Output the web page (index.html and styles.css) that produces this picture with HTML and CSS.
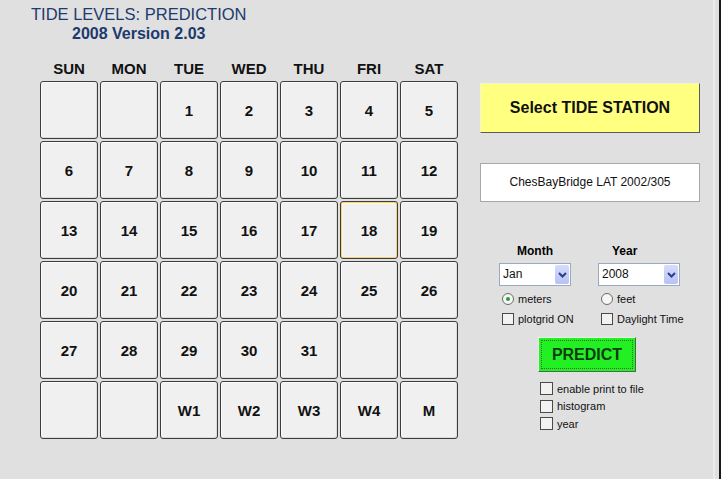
FILE: index.html
```html
<!DOCTYPE html>
<html lang="en">
<head>
    <meta charset="UTF-8">
    <title>Tide Levels: Prediction</title>
    <link rel="stylesheet" href="styles.css">
</head>
<body>
    <div class="frame">
        <div class="left">
            <div class="title">
                <div>TIDE LEVELS: PREDICTION</div>
                <div>2008 Version 2.03</div>
            </div>
            <div class="days">
                <span>SUN</span><span>MON</span><span>TUE</span><span>WED</span><span>THU</span><span>FRI</span><span>SAT</span>
            </div>
            <div class="calendar">
                <button class="cell"></button>
                <button class="cell"></button>
                <button class="cell">1</button>
                <button class="cell">2</button>
                <button class="cell">3</button>
                <button class="cell">4</button>
                <button class="cell">5</button>
                <button class="cell">6</button>
                <button class="cell">7</button>
                <button class="cell">8</button>
                <button class="cell">9</button>
                <button class="cell">10</button>
                <button class="cell">11</button>
                <button class="cell">12</button>
                <button class="cell">13</button>
                <button class="cell">14</button>
                <button class="cell">15</button>
                <button class="cell">16</button>
                <button class="cell">17</button>
                <button class="cell focus">18</button>
                <button class="cell">19</button>
                <button class="cell">20</button>
                <button class="cell">21</button>
                <button class="cell">22</button>
                <button class="cell">23</button>
                <button class="cell">24</button>
                <button class="cell">25</button>
                <button class="cell">26</button>
                <button class="cell">27</button>
                <button class="cell">28</button>
                <button class="cell">29</button>
                <button class="cell">30</button>
                <button class="cell">31</button>
                <button class="cell"></button>
                <button class="cell"></button>
                <button class="cell"></button>
                <button class="cell"></button>
                <button class="cell">W1</button>
                <button class="cell">W2</button>
                <button class="cell">W3</button>
                <button class="cell">W4</button>
                <button class="cell">M</button>
            </div>
        </div>

        <div class="right">
            <button class="station-btn">Select TIDE STATION</button>
            <div class="station-box">ChesBayBridge LAT 2002/305</div>

            <div class="pickers">
                <div class="col col-month">
                    <div class="label">Month</div>
                    <div class="select month">
                        <span class="value">Jan</span>
                        <span class="arrow"><svg width="9" height="6" viewBox="0 0 9 6"><path d="M1 1 L4.5 4.5 L8 1" fill="none" stroke="#2a3f8a" stroke-width="2"/></svg></span>
                    </div>
                    <div class="opt"><span class="radio on"></span>meters</div>
                    <div class="opt"><span class="check"></span>plotgrid ON</div>
                </div>
                <div class="col col-year">
                    <div class="label">Year</div>
                    <div class="select year">
                        <span class="value">2008</span>
                        <span class="arrow"><svg width="9" height="6" viewBox="0 0 9 6"><path d="M1 1 L4.5 4.5 L8 1" fill="none" stroke="#2a3f8a" stroke-width="2"/></svg></span>
                    </div>
                    <div class="opt"><span class="radio"></span>feet</div>
                    <div class="opt"><span class="check"></span>Daylight Time</div>
                </div>
            </div>

            <button class="predict"><span>PREDICT</span></button>

            <div class="extras">
                <div class="opt small"><span class="check"></span>enable print to file</div>
                <div class="opt small"><span class="check"></span>histogram</div>
                <div class="opt small"><span class="check"></span>year</div>
            </div>
        </div>
    </div>
</body>
</html>
```

FILE: styles.css
```css
body {
    margin: 0;
    background: #e0e0e0;
    font-family: "Liberation Sans", Arial, sans-serif;
}
.frame {
    width: 721px;
    height: 479px;
    display: flex;
    box-sizing: border-box;
    border-right: 2px solid #1a1a1a;
    box-shadow: inset -4px 0 0 #e0e0e0, inset -6px 0 0 #ececec;
    background: #e0e0e0;
}
.left {
    width: 480px;
    padding-left: 31px;
    box-sizing: border-box;
}
.title {
    display: inline-block;
    text-align: center;
    color: #1c3a6e;
    font-size: 16.5px;
    line-height: 19px;
    padding-top: 5px;
}
.title div:last-child {
    font-weight: bold;
    font-size: 16px;
    line-height: 19px;
}
.days {
    display: grid;
    grid-template-columns: repeat(7, 58px);
    column-gap: 2px;
    margin: 16px 0 0 9px;
    font-weight: bold;
    font-size: 15px;
    line-height: 20px;
    height: 22px;
    text-align: center;
    color: #111;
}
.calendar {
    display: grid;
    grid-template-columns: repeat(7, 58px);
    grid-auto-rows: 58px;
    gap: 2px;
    margin-left: 9px;
}
.cell {
    border: 1px solid #3c3c3c;
    border-radius: 3px;
    background: #f0f0f0;
    box-shadow: inset 1px 1px 0 #fafafa, inset -1px -1px 0 #dcdcdc;
    font-family: "Liberation Sans", Arial, sans-serif;
    font-weight: bold;
    font-size: 15px;
    color: #111;
    padding: 0;
}
.cell.focus {
    box-shadow: inset 0 0 0 1px #f3d27a, inset 2px 2px 0 #fff8d8;
}
.right {
    width: 220px;
    padding-top: 83px;
}
.station-btn {
    display: block;
    width: 220px;
    height: 50px;
    background: #ffff80;
    border: 1px solid;
    border-color: #f4f4d0 #5a5a5a #5a5a5a #f4f4d0;
    font-family: "Liberation Sans", Arial, sans-serif;
    font-weight: bold;
    font-size: 16px;
    color: #111;
}
.station-box {
    margin-top: 30px;
    height: 37px;
    background: #fff;
    border: 1px solid #a8a8a8;
    text-align: center;
    font-size: 12px;
    line-height: 37px;
    color: #111;
}
.pickers {
    display: flex;
    margin: 42px 0 0 19px;
}
.col {
    display: flex;
    flex-direction: column;
}
.col-month {
    width: 99px;
}
.label {
    font-weight: bold;
    font-size: 12px;
    line-height: 14px;
    height: 14px;
    margin-bottom: 5px;
}
.col-month .label {
    padding-left: 18px;
}
.col-year .label {
    padding-left: 14px;
}
.select {
    display: flex;
    height: 23px;
    box-sizing: border-box;
    border: 1px solid #9aa8c0;
    background: #fff;
    margin-bottom: 6px;
}
.select.month {
    width: 72px;
}
.select.year {
    width: 82px;
}
.select .value {
    flex: 1;
    font-size: 12px;
    line-height: 21px;
    padding-left: 3px;
    color: #111;
}
.select .arrow {
    width: 14px;
    margin: 1px;
    background: linear-gradient(#d6dcfb, #b7c2f4);
    border-radius: 2px;
    display: flex;
    align-items: center;
    justify-content: center;
}
.opt {
    display: flex;
    align-items: center;
    height: 14px;
    margin-bottom: 6px;
    font-size: 11px;
    color: #111;
    margin-left: 3px;
}
.radio {
    width: 10px;
    height: 10px;
    border: 1px solid #6a6a6a;
    border-radius: 50%;
    background: #f6f6f6;
    margin-right: 4px;
    display: flex;
    align-items: center;
    justify-content: center;
}
.radio.on::after {
    content: "";
    width: 4px;
    height: 4px;
    border-radius: 50%;
    background: #2f9b38;
}
.check {
    width: 10px;
    height: 10px;
    border: 1px solid #4a4a4a;
    background: #f2f2f2;
    margin-right: 4px;
}
.predict {
    display: block;
    margin: 5px 0 0 58px;
    width: 98px;
    height: 35px;
    padding: 2px;
    background: #22f022;
    border: 1px solid;
    border-color: #e4f4e4 #4a6a4a #4a6a4a #e4f4e4;
}
.predict span {
    display: block;
    height: 100%;
    box-sizing: border-box;
    border: 1px dotted #2a6a2a;
    font-family: "Liberation Sans", Arial, sans-serif;
    font-weight: bold;
    font-size: 16px;
    line-height: 27px;
    color: #0e3a14;
}
.extras {
    margin: 10px 0 0 57px;
}
.opt.small {
    height: 13px;
    margin-bottom: 4.5px;
    margin-left: 3px;
}
.opt.small .check {
    width: 11px;
    height: 11px;
}
```
